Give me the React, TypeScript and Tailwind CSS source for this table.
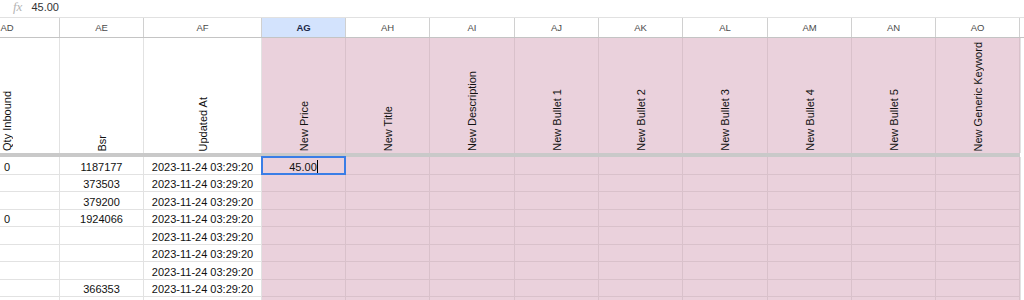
import React from "react";

type Col = { key: string; w: number; pink: boolean; title: string };

const cols: Col[] = [
  { key: "AD", w: 60, pink: false, title: "Qty Inbound" },
  { key: "AE", w: 84, pink: false, title: "Bsr" },
  { key: "AF", w: 118, pink: false, title: "Updated At" },
  { key: "AG", w: 84, pink: true, title: "New Price" },
  { key: "AH", w: 84, pink: true, title: "New Title" },
  { key: "AI", w: 85, pink: true, title: "New Description" },
  { key: "AJ", w: 84, pink: true, title: "New Bullet 1" },
  { key: "AK", w: 84, pink: true, title: "New Bullet 2" },
  { key: "AL", w: 85, pink: true, title: "New Bullet 3" },
  { key: "AM", w: 84, pink: true, title: "New Bullet 4" },
  { key: "AN", w: 84, pink: true, title: "New Bullet 5" },
  { key: "AO", w: 84, pink: true, title: "New Generic Keyword" },
];

const D = "2023-11-24 03:29:20";
const rows: { h: number; v: string[] }[] = [
  { h: 18, v: ["0", "1187177", D] },
  { h: 17, v: ["", "373503", D] },
  { h: 18, v: ["", "379200", D] },
  { h: 17, v: ["0", "1924066", D] },
  { h: 18, v: ["", "", D] },
  { h: 17, v: ["", "", D] },
  { h: 18, v: ["", "", D] },
  { h: 17, v: ["", "366353", D] },
  { h: 18, v: ["", "", ""] },
];

function Inner({ first, children, className }: { first: boolean; children?: React.ReactNode; className: string }) {
  if (first) {
    return (
      <div className="w-full h-full overflow-hidden">
        <div className={"ml-[-46px] w-[106px] h-full " + className}>{children}</div>
      </div>
    );
  }
  return <div className={"w-full h-full " + className}>{children}</div>;
}

export default function App() {
  return (
    <div
      className="w-[1024px] h-[300px] overflow-hidden bg-white text-[#111]"
      style={{ fontFamily: '"Liberation Sans", Arial, sans-serif' }}
    >
      {/* formula bar */}
      <div className="h-[18px] flex items-start border-b border-[#e1e1e1]">
        <span
          className="ml-[13px] mt-[0px] text-[13px] leading-[14px] italic text-[#b4b4b4]"
          style={{ fontFamily: '"Liberation Serif", serif' }}
        >
          fx
        </span>
        <span className="ml-[9px] mt-[1px] text-[11px] leading-[12px] text-[#333]">45.00</span>
      </div>

      {/* column letters */}
      <div className="flex h-[20px] border-b border-[#c4c4c4]">
        {cols.map((c, i) => (
          <div
            key={c.key}
            style={{ width: c.w }}
            className={
              "shrink-0 h-full border-r border-[#d0d0d0] " +
              (c.key === "AG" ? "bg-[#d3e3fd]" : "bg-white")
            }
          >
            <Inner first={i === 0} className="flex items-center justify-center">
              <span
                className={
                  "text-[9.5px] leading-[10px] " +
                  (c.key === "AG" ? "font-bold text-[#1c2a48]" : "text-[#4a4a4a]")
                }
              >
                {c.key}
              </span>
            </Inner>
          </div>
        ))}
        <div className="flex-1 h-full bg-white" />
      </div>

      {/* tall header row */}
      <div className="flex h-[115px]">
        {cols.map((c, i) => (
          <div
            key={c.key}
            style={{ width: c.w }}
            className={
              "shrink-0 h-full border-r " +
              (c.pink ? "bg-[#ead1dc] border-[#d9c1cb]" : "bg-white border-[#e2e2e2]")
            }
          >
            <Inner first={i === 0} className="flex flex-col items-center justify-end pb-[2px]">
              <span className="text-[11px] leading-[12px] whitespace-nowrap rotate-180 [writing-mode:vertical-rl] text-[#111]">
                {c.title}
              </span>
            </Inner>
          </div>
        ))}
        <div className="flex-1 h-full bg-white border-l border-[#e2e2e2]" />
      </div>

      {/* freeze bar */}
      <div className="flex h-[4px]">
        <div className="w-[1020px] h-full bg-[#c9c9c9]" />
        <div className="flex-1 h-full bg-white" />
      </div>

      {/* data rows */}
      {rows.map((r, ri) => (
        <div key={ri} className="flex" style={{ height: r.h }}>
          {cols.map((c, i) => (
            <div
              key={c.key}
              style={{ width: c.w }}
              className={
                "shrink-0 h-full border-r border-b relative " +
                (c.pink ? "bg-[#ead1dc] border-[#d9c1cb]" : "bg-white border-[#e2e2e2]")
              }
            >
              <Inner first={i === 0} className="flex items-end justify-center">
                <span className="text-[11px] leading-[13px] whitespace-nowrap">
                  {i < 3 ? r.v[i] : ""}
                  {ri === 0 && c.key === "AG" ? "45.00" : ""}
                </span>
                {ri === 0 && c.key === "AG" ? (
                  <span className="w-px h-[13px] bg-black mb-[1px]" />
                ) : null}
              </Inner>
              {ri === 0 && c.key === "AG" ? (
                <div className="absolute left-[-1px] top-[-1px] right-[-1px] bottom-[-1px] border-2 border-[#3a7de6]" />
              ) : null}
            </div>
          ))}
          <div className="flex-1 h-full bg-white border-l border-[#e2e2e2]" />
        </div>
      ))}
    </div>
  );
}
